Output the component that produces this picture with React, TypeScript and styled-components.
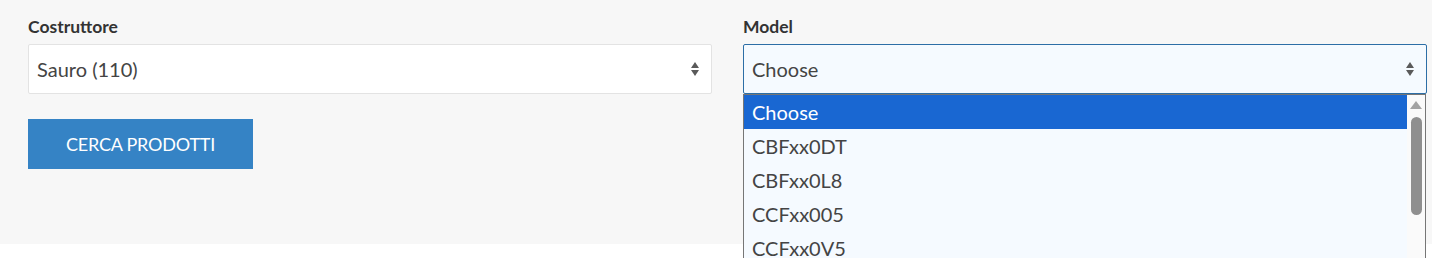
import styled, { createGlobalStyle } from 'styled-components';

const GlobalStyle = createGlobalStyle`
  body {
    margin: 0;
    padding: 0;
    background: #ffffff;
    font-family: Lato, 'Open Sans', sans-serif;
  }
`;

const Page = styled.main`
  min-height: 258px;
  background: #ffffff;
`;

const Panel = styled.section`
  background: #f7f7f7;
  height: 244px;
  box-sizing: border-box;
  padding: 14px 5px 0 28px;
  display: grid;
  grid-template-columns: 684px 684px;
  column-gap: 31px;
  align-items: start;
`;

const Field = styled.div`
  display: flex;
  flex-direction: column;
`;

const Label = styled.label`
  font-size: 17.5px;
  font-weight: 700;
  color: #333333;
  line-height: 26px;
  height: 30px;
`;

const SelectWrap = styled.div`
  position: relative;
  z-index: 2;
`;

const SelectBox = styled.div<{ $open?: boolean }>`
  height: 50px;
  box-sizing: border-box;
  border: 1px solid ${(p) => (p.$open ? '#2c6ea6' : '#e3e3e3')};
  border-radius: 2px;
  background: ${(p) => (p.$open ? '#f5faff' : '#ffffff')};
  display: flex;
  align-items: center;
  justify-content: space-between;
  padding: 0 12px 0 8px;
  font-size: 20px;
  color: #444444;
`;

const Arrows = () => (
  <svg width="8" height="14" viewBox="0 0 8 14">
    <path d="M4 0 L8 6 L0 6 Z" fill="#5a5a5a" />
    <path d="M0 8 L8 8 L4 14 Z" fill="#5a5a5a" />
  </svg>
);

const SearchButton = styled.button`
  margin-top: 25px;
  width: 225px;
  height: 50px;
  border: none;
  border-radius: 0;
  background: #3583c5;
  color: #ffffff;
  font-family: Lato, 'Open Sans', sans-serif;
  font-size: 18px;
  letter-spacing: -0.2px;
  text-transform: uppercase;
  cursor: pointer;
`;

const ListBox = styled.div`
  position: absolute;
  top: 50px;
  left: 0;
  right: 1px;
  height: 164px;
  box-sizing: border-box;
  border: 1px solid #767676;
  border-bottom: none;
  background: #f5faff;
  display: flex;
  overflow: hidden;
`;

const Options = styled.ul`
  list-style: none;
  margin: 0;
  padding: 0;
  flex: 1;
`;

const Option = styled.li<{ $selected?: boolean }>`
  height: 34px;
  display: flex;
  align-items: center;
  padding-left: 8px;
  font-size: 20px;
  color: ${(p) => (p.$selected ? '#ffffff' : '#444444')};
  background: ${(p) => (p.$selected ? '#1967d2' : 'transparent')};
`;

const ScrollTrack = styled.div`
  width: 18px;
  background: #fafafa;
  display: flex;
  flex-direction: column;
  align-items: center;
  padding-top: 6px;
  gap: 8px;
`;

const ScrollThumb = styled.div`
  width: 11px;
  height: 98px;
  border-radius: 6px;
  background: #8f8f8f;
`;

const models = ['CBFxx0DT', 'CBFxx0L8', 'CCFxx005', 'CCFxx0V5'];

export default function App() {
  return (
    <Page>
      <GlobalStyle />
      <Panel>
        <Field>
          <Label>Costruttore</Label>
          <SelectBox>
            <span>Sauro (110)</span>
            <Arrows />
          </SelectBox>
          <SearchButton>Cerca prodotti</SearchButton>
        </Field>
        <Field>
          <Label>Model</Label>
          <SelectWrap>
            <SelectBox $open>
              <span>Choose</span>
              <Arrows />
            </SelectBox>
            <ListBox>
              <Options>
                <Option $selected>Choose</Option>
                {models.map((m) => (
                  <Option key={m}>{m}</Option>
                ))}
              </Options>
              <ScrollTrack>
                <svg width="12" height="8" viewBox="0 0 12 8">
                  <path d="M6 0 L12 8 L0 8 Z" fill="#a3a3a3" />
                </svg>
                <ScrollThumb />
              </ScrollTrack>
            </ListBox>
          </SelectWrap>
        </Field>
      </Panel>
    </Page>
  );
}
